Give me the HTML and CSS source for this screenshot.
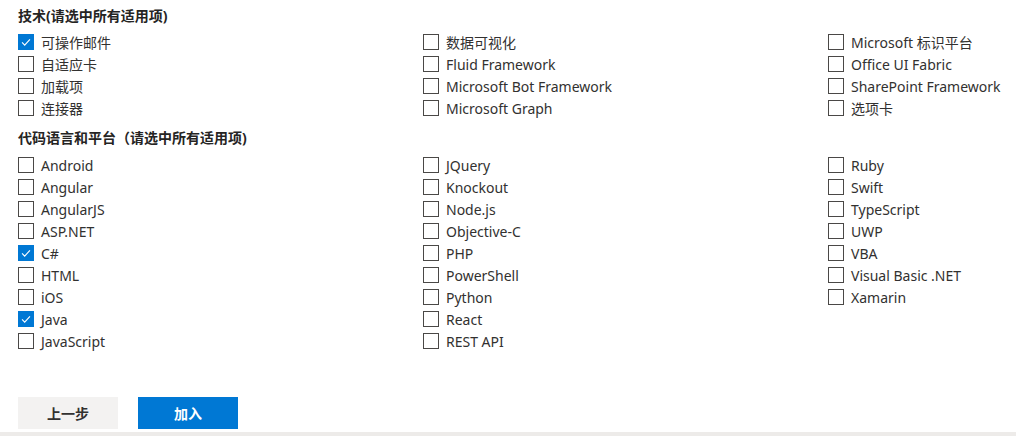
FILE: index.html
```html
<!DOCTYPE html>
<html lang="zh-CN">
<head>
    <meta charset="UTF-8">
    <title>选择技术</title>
    <link rel="stylesheet" href="styles.css">
</head>
<body>
    <div class="page">
        <h2 class="section-title">技术(请选中所有适用项)</h2>
        <div class="options">
            <div class="col">
                <label class="opt"><span class="box checked"><svg viewBox="0 0 16 16"><polyline points="3.5,8.5 6.5,11.5 12.5,5" /></svg></span>可操作邮件</label>
                <label class="opt"><span class="box"></span>自适应卡</label>
                <label class="opt"><span class="box"></span>加载项</label>
                <label class="opt"><span class="box"></span>连接器</label>
            </div>
            <div class="col">
                <label class="opt"><span class="box"></span>数据可视化</label>
                <label class="opt"><span class="box"></span>Fluid Framework</label>
                <label class="opt"><span class="box"></span>Microsoft Bot Framework</label>
                <label class="opt"><span class="box"></span>Microsoft Graph</label>
            </div>
            <div class="col">
                <label class="opt"><span class="box"></span>Microsoft 标识平台</label>
                <label class="opt"><span class="box"></span>Office UI Fabric</label>
                <label class="opt"><span class="box"></span>SharePoint Framework</label>
                <label class="opt"><span class="box"></span>选项卡</label>
            </div>
        </div>

        <h2 class="section-title second">代码语言和平台（请选中所有适用项)</h2>
        <div class="options">
            <div class="col">
                <label class="opt"><span class="box"></span>Android</label>
                <label class="opt"><span class="box"></span>Angular</label>
                <label class="opt"><span class="box"></span>AngularJS</label>
                <label class="opt"><span class="box"></span>ASP.NET</label>
                <label class="opt"><span class="box checked"><svg viewBox="0 0 16 16"><polyline points="3.5,8.5 6.5,11.5 12.5,5" /></svg></span>C#</label>
                <label class="opt"><span class="box"></span>HTML</label>
                <label class="opt"><span class="box"></span>iOS</label>
                <label class="opt"><span class="box checked"><svg viewBox="0 0 16 16"><polyline points="3.5,8.5 6.5,11.5 12.5,5" /></svg></span>Java</label>
                <label class="opt"><span class="box"></span>JavaScript</label>
            </div>
            <div class="col">
                <label class="opt"><span class="box"></span>JQuery</label>
                <label class="opt"><span class="box"></span>Knockout</label>
                <label class="opt"><span class="box"></span>Node.js</label>
                <label class="opt"><span class="box"></span>Objective-C</label>
                <label class="opt"><span class="box"></span>PHP</label>
                <label class="opt"><span class="box"></span>PowerShell</label>
                <label class="opt"><span class="box"></span>Python</label>
                <label class="opt"><span class="box"></span>React</label>
                <label class="opt"><span class="box"></span>REST API</label>
            </div>
            <div class="col">
                <label class="opt"><span class="box"></span>Ruby</label>
                <label class="opt"><span class="box"></span>Swift</label>
                <label class="opt"><span class="box"></span>TypeScript</label>
                <label class="opt"><span class="box"></span>UWP</label>
                <label class="opt"><span class="box"></span>VBA</label>
                <label class="opt"><span class="box"></span>Visual Basic .NET</label>
                <label class="opt"><span class="box"></span>Xamarin</label>
            </div>
        </div>

        <div class="actions">
            <button class="btn btn-default">上一步</button>
            <button class="btn btn-primary">加入</button>
        </div>
    </div>
    <div class="bottom-bar"></div>
</body>
</html>
```

FILE: styles.css
```css
body {
    margin: 0;
    font-family: "Noto Sans", "Noto Sans CJK SC", sans-serif;
    color: #323130;
    background: #fff;
    overflow: hidden;
}
.page {
    padding: 6px 0 0 18px;
    height: 432px;
    box-sizing: border-box;
}
.section-title {
    font-size: 14px;
    font-weight: bold;
    line-height: 20px;
    margin: 0 0 5px;
    color: #252423;
}
.section-title.second {
    margin-top: 9px;
    margin-bottom: 6px;
}
.options {
    display: flex;
}
.col {
    width: 405px;
    flex-shrink: 0;
    display: flex;
    flex-direction: column;
}
.col:last-child {
    width: auto;
    flex: 1;
    min-width: 0;
}
.opt {
    display: flex;
    align-items: center;
    height: 22px;
    font-size: 14px;
    white-space: nowrap;
}
.box {
    width: 16px;
    height: 16px;
    border: 1px solid #4a4846;
    box-sizing: border-box;
    margin-right: 7px;
    flex-shrink: 0;
    display: flex;
    align-items: center;
    justify-content: center;
}
.box.checked {
    background-color: #0078d4;
    border-color: #0078d4;
}
.box svg {
    width: 16px;
    height: 16px;
    fill: none;
    stroke: #fff;
    stroke-width: 1.3;
}
.actions {
    display: flex;
    gap: 20px;
    margin-top: 45px;
}
.btn {
    width: 100px;
    height: 32px;
    border: none;
    font-size: 14px;
    font-weight: bold;
    font-family: "Noto Sans", "Noto Sans CJK SC", sans-serif;
    cursor: pointer;
}
.btn-default {
    background-color: #f3f2f1;
    color: #323130;
}
.btn-primary {
    background-color: #0078d4;
    color: #fff;
}
.bottom-bar {
    height: 4px;
    background-color: #edebe9;
}
```
